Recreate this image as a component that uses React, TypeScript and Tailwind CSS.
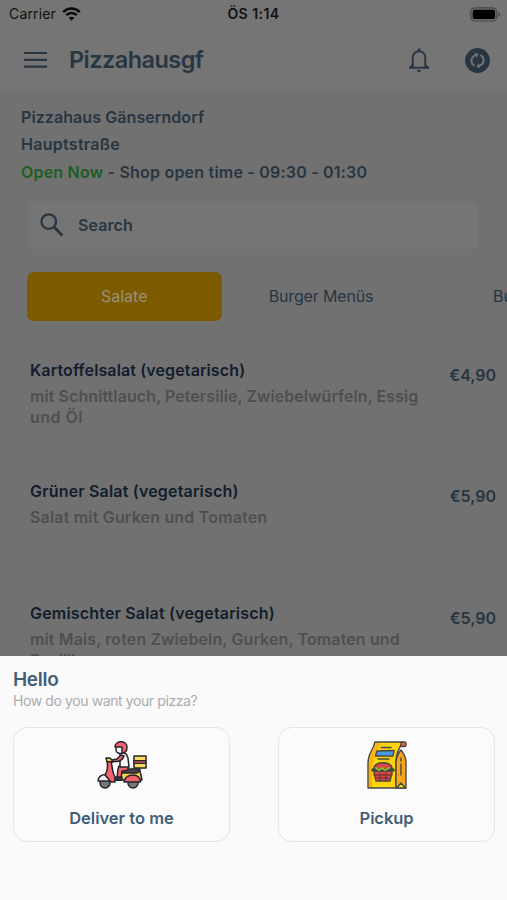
import type { ReactNode } from 'react';

type Item = { name: string; text: string[]; price: string; nameTrack: string; textTrack: string[] };

const items: Item[] = [
  {
    name: 'Kartoffelsalat (vegetarisch)',
    text: ['mit Schnittlauch, Petersilie, Zwiebelwürfeln, Essig', 'und Öl'],
    price: '€4,90',
    nameTrack: 'tracking-[0.12px]',
    textTrack: ['tracking-[0.07px]', 'tracking-[0.45px]'],
  },
  {
    name: 'Grüner Salat (vegetarisch)',
    text: ['Salat mit Gurken und Tomaten'],
    price: '€5,90',
    nameTrack: 'tracking-[0.18px]',
    textTrack: ['tracking-[0.18px]'],
  },
  {
    name: 'Gemischter Salat (vegetarisch)',
    text: ['mit Mais, roten Zwiebeln, Gurken, Tomaten und', 'Basilikum'],
    price: '€5,90',
    nameTrack: 'tracking-[0.18px]',
    textTrack: ['tracking-[0.12px]', 'tracking-[0px]'],
  },
];

function StatusBar() {
  return (
    <div className="grid h-7 grid-cols-3 items-center pl-[9px] pr-[6px] text-[14px] leading-none text-[#111]">
      <div className="flex items-center gap-[6px]">
        <span className="tracking-[0.15px]">Carrier</span>
        <svg width="19" height="14" viewBox="0 0 19 14" fill="none" stroke="#0a0a0a" strokeWidth="2.5">
          <path d="M1.2 5.1C6 .3 13 .3 17.8 5.1" />
          <path d="M4.2 8.2c3-3 7.6-3 10.6 0" />
          <path d="M9.5 13.7 6.7 10.8c1.6-1.5 4-1.5 5.6 0z" fill="#0a0a0a" stroke="none" />
        </svg>
      </div>
      <span className="-ml-[3px] text-center font-semibold tracking-[0.45px]">ÖS 1:14</span>
      <svg className="justify-self-end" width="31" height="15" viewBox="0 0 31 15">
        <rect x=".8" y=".8" width="26" height="13.2" rx="4" fill="#6d6d6d" stroke="#4a4a4a" strokeWidth="1.2" />
        <rect x="2.7" y="2.7" width="22.4" height="9.4" rx="2.2" fill="#000" />
        <path d="M28.3 5v5c1.2-.4 2-1.4 2-2.5s-.8-2.1-2-2.5z" fill="#4a4a4a" />
      </svg>
    </div>
  );
}

function Header() {
  return (
    <header className="flex h-16 items-center pl-6 pr-[17px]">
      <svg width="23" height="16" viewBox="0 0 23 16" fill="#283542">
        <path d="M0 0h23v2.1H0zM0 6.8h23v2.1H0zM0 13.6h23v2.1H0z" />
      </svg>
      <h1 className="ml-[22px] text-[23.5px] font-semibold leading-none tracking-[-0.55px]">Pizzahausgf</h1>
      <svg className="ml-auto" width="20" height="24" viewBox="0 0 20 24" fill="none" stroke="#283542" strokeWidth="2">
        <path d="M3.7 19.8V9.8C3.7 6 6.300 3.300 10 3.300s6.300 2.700 6.300 6.500v10" />
        <path d="M0 19.800h20M1.200 19.300 3.800 17.200M18.800 19.300 16.200 17.200" />
        <path d="M10 1.700v1" strokeWidth="3" strokeLinecap="round" />
        <path d="M7.900 22h4.200c0 1-.8 1.900-2.100 1.900S7.900 23 7.900 22z" fill="#283542" stroke="none" />
      </svg>
      <svg className="ml-[36px]" width="25" height="25" viewBox="0 0 25 25" fill="none">
        <circle cx="12.500" cy="12.500" r="12.400" fill="#283542" />
        <g transform="rotate(-18 12.500 12.500)">
          <g stroke="#757575" strokeWidth="2">
            <path d="M8.200 16.700A5.700 5.700 0 0 1 12.700 6.900" />
            <path d="M16.800 8.300A5.700 5.700 0 0 1 12.300 18.100" />
          </g>
          <path d="M12.300 4.100v5.600l3.100-2.800zM12.700 15.300v5.600l-3.100-2.800z" fill="#757575" />
        </g>
      </svg>
    </header>
  );
}

function ShopInfo() {
  return (
    <div className="pl-[21px] pt-[12px] text-[16px] font-semibold leading-[27.3px]">
      <p className="tracking-[0.08px]">Pizzahaus Gänserndorf</p>
      <p className="tracking-[0.28px]">Hauptstraße</p>
      <p className="whitespace-nowrap tracking-[0.21px]">
        <span className="text-[#1d5e22]">Open Now</span> - Shop open time - 09:30 - 01:30
      </p>
    </div>
  );
}

function SearchBox() {
  return (
    <div className="ml-7 mr-[29px] mt-[16px] flex h-[47px] items-center rounded-sm bg-[#757575] pl-[12px]">
      <svg className="-mt-px" width="24" height="24" viewBox="0 0 24 24" fill="none" stroke="#283542" strokeWidth="2.300">
        <circle cx="8.800" cy="8.600" r="7.300" />
        <path d="m14.200 14.200 8.200 8.200" strokeWidth="2.800" />
      </svg>
      <span className="ml-[14px] text-[16px] font-semibold tracking-[0.1px]">Search</span>
    </div>
  );
}

function Categories() {
  return (
    <nav className="mt-[23px] flex h-[49px] items-stretch overflow-hidden pl-[26.500px] text-[16px]">
      <div className="flex w-[195.500px] shrink-0 items-center justify-center rounded-[7px] bg-[#7b5a00] text-[#99907a]">
        Salate
      </div>
      <div className="flex w-[198px] shrink-0 items-center justify-center tracking-[-0.15px]">Burger Menüs</div>
      <div className="flex w-[198px] shrink-0 items-center pl-[73px]">Burger</div>
    </nav>
  );
}

function Menu() {
  return (
    <div className="mt-[38px]">
      {items.map((it) => (
        <div key={it.name} className="flex h-[121.500px] items-start justify-between pl-[30px] pr-[11px]">
          <div className="whitespace-nowrap text-[16px] font-semibold">
            <p className={`leading-[23px] text-[#111d2c] ${it.nameTrack}`}>{it.name}</p>
            <div className="pt-[4px] leading-[21px] text-[#4f4f4f]">
              {it.text.map((t, i) => (
                <p key={t} className={it.textTrack[i]}>{t}</p>
              ))}
            </div>
          </div>
          <p className="pt-[5px] text-[16px] font-semibold leading-[23px] tracking-[0px]">{it.price}</p>
        </div>
      ))}
    </div>
  );
}

function Scooter() {
  return (
    <svg width="50" height="48" viewBox="0 0 50 48" stroke="#24242b" strokeWidth="1.500" strokeLinejoin="round" strokeLinecap="round">
      <circle cx="8" cy="42" r="5" fill="#777" />
      <circle cx="36" cy="42" r="5" fill="#777" />
      <path d="M1 40c.5-4.500 4-6.500 8-6.500L16 40z" fill="#f4f4f4" />
      <path d="M25 30h18l2 9H16c5-1 8-4 9-9z" fill="#fbd24e" />
      <path d="M27 41c1-5 4-7 9-7s7 2 7.500 7z" fill="#f4636d" />
      <path d="M25 28h18c-1 3-2 4-4 4H25z" fill="#48444c" />
      <path d="M10 20h4c1.500 6 1 11 4 16v5h-4l-6-7c3-4 3-8 2-14z" fill="#f4636d" />
      <path d="M22 25h9c1 3-1 5-4 5h-2l-1 7h-4l1-9z" fill="#f4636d" />
      <path d="M19 36h6v3h-7z" fill="#3e3a44" />
      <path d="M23 13c3-3 7-1 8 4l1 9h-9z" fill="#f5f5f5" />
      <path d="M27 15c-1 4-5 6-9 5.500l-3 .5v-2l5-1 4-4z" fill="#f4636d" />
      <path d="M9 17h4l2 2v2l-5-.5z" fill="#fbd24e" />
      <path d="M19 5h7v7c-4 1-7 0-7-3z" fill="#fff" />
      <path d="M18 6c0-7 12-7 12 0 0 4-1 6-5 6V6z" fill="#f4636d" />
      <path d="M37 15h12v12H37z" fill="#fbdb61" />
      <path d="M37 19.500h12v3H37z" fill="#a34b46" strokeWidth="1" />
    </svg>
  );
}

function PizzaBag() {
  return (
    <svg width="40" height="48" viewBox="0 0 40 48" stroke="#454a48" strokeWidth="1.400" strokeLinejoin="round" strokeLinecap="round">
      <path d="M8 1h28c-4 6-7 12-7 19v27H1V22C1 12 6 10 8 1z" fill="#ffd20a" />
      <path d="M2 22C3 13 7 11 9 2h3C11 13 6 14 5 22v24H2z" fill="#ffae0c" stroke="none" />
      <path d="M34 9c-4 5-5 8-5 13v25h10V21c0-5-2-8-5-12z" fill="#fba518" />
      <path d="m29.500 47 4.500-5 4.500 5z" fill="#ffe01e" />
      <path d="M34 17v3M34 23v11" fill="none" />
      <rect x="34" y="1" width="5" height="4.500" rx="1.500" fill="#ef6039" />
      <path d="m10 10 17-.5-1 5.500H8.500z" fill="#4b9ce8" />
      <path d="M14 6.500h10M11 18h11" fill="none" />
      <path d="M7 27c0-7 18-7 18 0v5l-2 8H9l-2-8z" fill="#d94a42" />
      <path d="M6 29h20" stroke="#3d4941" strokeWidth="3.500" />
      <path d="m9 27 3 2 3-2 3 2 4-2" fill="none" stroke="#90bf28" strokeWidth="1.800" />
      <path d="M7 34h18M10 37h12M13 32v8M19 32v8" fill="none" stroke="#7e3439" strokeWidth="1.300" />
    </svg>
  );
}

function Choice({ label, className, children }: { label: string; className: string; children: ReactNode }) {
  return (
    <button className="flex h-[115px] w-[217px] flex-col items-center rounded-[14px] border border-[#e4e5e6] bg-[#fbfbfb] pt-[13px]">
      {children}
      <span className={`mt-[17px] text-[16.500px] font-semibold leading-6 text-[#435e78] ${className}`}>{label}</span>
    </button>
  );
}

function Sheet() {
  return (
    <section className="absolute inset-x-0 bottom-0 h-[244px] bg-[#fafafa] px-[13px] pt-[12px]">
      <h2 className="text-[19px] font-semibold leading-6 tracking-[-0.3px] text-[#435e78]">Hello</h2>
      <p className="-mt-px text-[14px] leading-[19px] tracking-[-0.4px] text-[#acacac]">How do you want your pizza?</p>
      <div className="-mr-px mt-[17px] flex justify-between">
        <Choice label="Deliver to me" className="tracking-[0px]">
          <Scooter />
        </Choice>
        <Choice label="Pickup" className="tracking-[-0.1px]">
          <PizzaBag />
        </Choice>
      </div>
    </section>
  );
}

export default function App() {
  return (
    <main className="relative h-[900px] w-full overflow-hidden bg-[#717171] font-['Inter',sans-serif] text-[#283542]">
      <div className="bg-[#757575]">
        <StatusBar />
        <Header />
      </div>
      <ShopInfo />
      <SearchBox />
      <Categories />
      <Menu />
      <Sheet />
    </main>
  );
}
